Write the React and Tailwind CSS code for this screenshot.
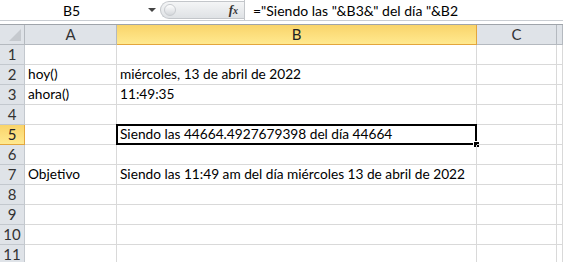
import React from 'react';

const cols = ['A', 'B', 'C', ''];

const data = {
    2: ['hoy()', 'miércoles, 13 de abril de 2022'],
    3: ['ahora()', '11:49:35'],
    5: ['', 'Siendo las 44664.4927679398 del día 44664'],
    7: ['Objetivo', 'Siendo las 11:49 am del día miércoles 13 de abril de 2022'],
};

const font = { fontFamily: 'Lato, "Liberation Sans", sans-serif' };

const FormulaBar = () => (
    <div className="flex h-[21px] bg-white border-b border-[#c9cdd2] text-[14px] text-black">
        <div className="w-[143px] flex items-center justify-center">B5</div>
        <div className="w-[17px] flex items-center justify-center">
            <span className="w-0 h-0 border-l-[4px] border-r-[4px] border-t-[4px] border-l-transparent border-r-transparent border-t-[#444]" />
        </div>
        <div className="w-[84px] my-[1px] flex items-center rounded-l-full border border-r-0 border-[#c3c6ca] bg-gradient-to-b from-[#f4f5f6] to-[#dfe2e5]">
            <span className="ml-[3px] w-[12px] h-[12px] rounded-full border border-[#c8cbcf] bg-gradient-to-b from-[#ffffff] to-[#d4d7db]" />
            <span className="ml-auto mr-[6px] text-[13px] italic font-bold text-[#333]" style={{ fontFamily: '"Liberation Serif", serif' }}>
                f<span className="text-[10px]">x</span>
            </span>
        </div>
        <div className="w-px bg-[#c3c6ca]" />
        <div className="flex-1 flex items-center pl-[8px] whitespace-nowrap">
            ="Siendo las "&amp;B3&amp;" del día "&amp;B2
        </div>
    </div>
);

const App = () => {
    const rows = [1, 2, 3, 4, 5, 6, 7, 8, 9, 10, 11];
    return (
        <div className="w-[563px] h-[262px] overflow-hidden bg-white" style={font}>
            <FormulaBar />
            <div className="h-[3px] bg-white" />
            <div className="border-t border-[#9fa4aa] grid grid-cols-[25px_92px_360px_80px_1fr] auto-rows-[20px] text-[13.7px]">
                <div className="bg-[#dfe3e8] border-r border-b border-[#b4b9bf] relative">
                    <span className="absolute right-[3px] bottom-[3px] w-0 h-0 border-b-[12px] border-l-[12px] border-b-[#c5c9ce] border-l-transparent" />
                </div>
                {cols.map((c, i) =>
                    c === 'B' ? (
                        <div key={i} className="flex items-center justify-center bg-gradient-to-b from-[#f9d46a] to-[#ffe98f] border-r border-b border-[#e3a63d] text-[#222] text-[15px]">
                            {c}
                        </div>
                    ) : (
                        <div key={i} className="flex items-center justify-center bg-[#dfe3e8] border-r border-b border-[#b4b9bf] text-[#333] text-[15px]">
                            {c}
                        </div>
                    )
                )}
                {rows.map((r) => (
                    <React.Fragment key={r}>
                        <div
                            className={
                                r === 5
                                    ? 'flex items-center justify-center bg-gradient-to-b from-[#f9d46a] to-[#ffe98f] border-r border-b border-[#e3a63d] text-[#222] text-[15px]'
                                    : 'flex items-center justify-center bg-[#dfe3e8] border-r border-b border-[#c3c8ce] text-[#333] text-[15px]'
                            }
                        >
                            {r}
                        </div>
                        {[0, 1, 2, 3].map((ci) => {
                            const val = data[r] ? data[r][ci] || '' : '';
                            const sel = r === 5 && ci === 1;
                            return (
                                <div key={ci} className="relative flex items-center pl-[3px] border-r border-b border-[#d9d9d9] whitespace-nowrap text-black">
                                    {val}
                                    {sel && (
                                        <>
                                            <span className="absolute -left-[1px] -top-[1px] -right-[1px] -bottom-[1px] border-2 border-black pointer-events-none" />
                                            <span className="absolute -right-[4px] -bottom-[4px] w-[7px] h-[7px] bg-black border border-white" />
                                        </>
                                    )}
                                </div>
                            );
                        })}
                    </React.Fragment>
                ))}
            </div>
        </div>
    );
};

export default App;
